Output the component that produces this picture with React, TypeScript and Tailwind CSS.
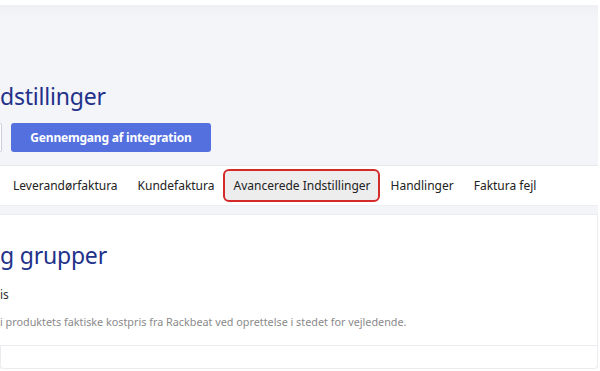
import React from 'react';

export default function App() {
  return (
    <div className="w-[600px] h-[371px] bg-white overflow-hidden pt-[5px] pr-[2px] font-['Noto_Sans',sans-serif]">
      <div className="bg-[#f4f5f9] rounded-br-[4px] h-[364px] flex flex-col">
        {/* header */}
        <div className="h-[161px] flex flex-col justify-end pb-[13px] border-b border-[#e7e8ec] bg-gradient-to-b from-[#eef0f4] to-[#f4f5f9] to-[8%]">
          <h1 className="text-[23px] leading-none text-[#22318a] tracking-[-0.2px] mb-[15px]">dstillinger</h1>
          <div className="flex items-center gap-[9px]">
            <div className="w-[2px] h-[29px] border border-l-0 border-[#c9cde0] rounded-r-[3px] bg-white" />
            <button className="h-[29px] w-[200px] rounded-[3px] bg-[#5470de] text-white text-[12px] font-bold tracking-[-0.2px]">
              Gennemgang af integration
            </button>
          </div>
        </div>
        {/* tabs */}
        <div className="h-[40px] bg-white flex items-center whitespace-nowrap text-[12px] text-[#222] border-b border-[#eceef2]">
          <span className="ml-[13px]">Leverandørfaktura</span>
          <span className="ml-[20px]">Kundefaktura</span>
          <div className="ml-[9px] h-[33px] border-2 border-[#d42a2a] rounded-[6px] bg-[#ededed] pl-[8px] pr-[7px] flex items-center">
            Avancerede Indstillinger
          </div>
          <span className="ml-[11px]">Handlinger</span>
          <span className="ml-[20px]">Faktura fejl</span>
        </div>
        <div className="h-[8px]" />
        {/* card */}
        <div className="bg-white border border-l-0 border-[#ebecef] h-[132px] pt-[29px]">
          <h2 className="text-[23px] leading-none text-[#22318a] tracking-[-0.2px]">g grupper</h2>
          <p className="mt-[22px] text-[12px] text-[#333] leading-none">is</p>
          <p className="mt-[16px] text-[10.8px] text-[#8a8a8a] leading-none">
            i produktets faktiske kostpris fra Rackbeat ved oprettelse i stedet for vejledende.
          </p>
        </div>
        <div className="bg-white border border-t-0 border-[#ebecef] rounded-b-[4px] h-[23px]" />
      </div>
    </div>
  );
}
